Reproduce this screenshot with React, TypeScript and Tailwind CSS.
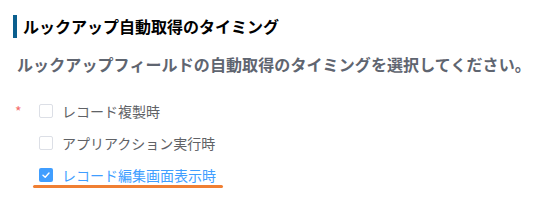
import React from "react";

const font = { fontFamily: '"Noto Sans CJK JP", "Noto Sans", sans-serif' };

function Box({ checked }: { checked?: boolean }) {
  return checked ? (
    <span className="flex h-[14px] w-[14px] items-center justify-center rounded-[2px] bg-[#409eff]">
      <svg width="10" height="10" viewBox="0 0 10 10">
        <path d="M2 5.2 L4.2 7.2 L8 3" fill="none" stroke="#fff" strokeWidth="1.4" strokeLinecap="round" strokeLinejoin="round" />
      </svg>
    </span>
  ) : (
    <span className="h-[14px] w-[14px] rounded-[2px] border border-[#dcdfe6] bg-white" />
  );
}

export default function App() {
  const items = [
    { label: "レコード複製時", checked: false },
    { label: "アプリアクション実行時", checked: false },
    { label: "レコード編集画面表示時", checked: true },
  ];
  return (
    <div className="h-[213px] w-[545px] bg-white" style={font}>
      <div className="flex items-center pl-[13px] pt-[15px]">
        <span className="h-[23px] w-[4px] bg-[#0b5f8e]" />
        <span className="ml-[6px] text-[16px] font-bold leading-[23px] text-black">ルックアップ自動取得のタイミング</span>
      </div>
      <div className="mt-[15px] pl-[17px] text-[16px] font-bold leading-[22px] tracking-[0.1px] text-[#5f6570]">
        ルックアップフィールドの自動取得のタイミングを選択してください。
      </div>
      <div className="mt-[29px] flex">
        <span className="w-[39px] pl-[15px] text-[14px] leading-[14px] text-[#f56c6c]">*</span>
        <div className="flex flex-col gap-[18px]">
          {items.map((it, i) => (
            <div key={i} className="relative flex h-[14px] items-center">
              <Box checked={it.checked} />
              <span className={`ml-[9px] text-[14px] leading-[14px] ${it.checked ? "text-[#409eff]" : "text-[#606266]"}`}>{it.label}</span>
              {it.checked && <span className="absolute left-[-6px] top-[17px] h-[3px] w-[190px] rounded-full bg-[#f07f32]" />}
            </div>
          ))}
        </div>
      </div>
    </div>
  );
}
